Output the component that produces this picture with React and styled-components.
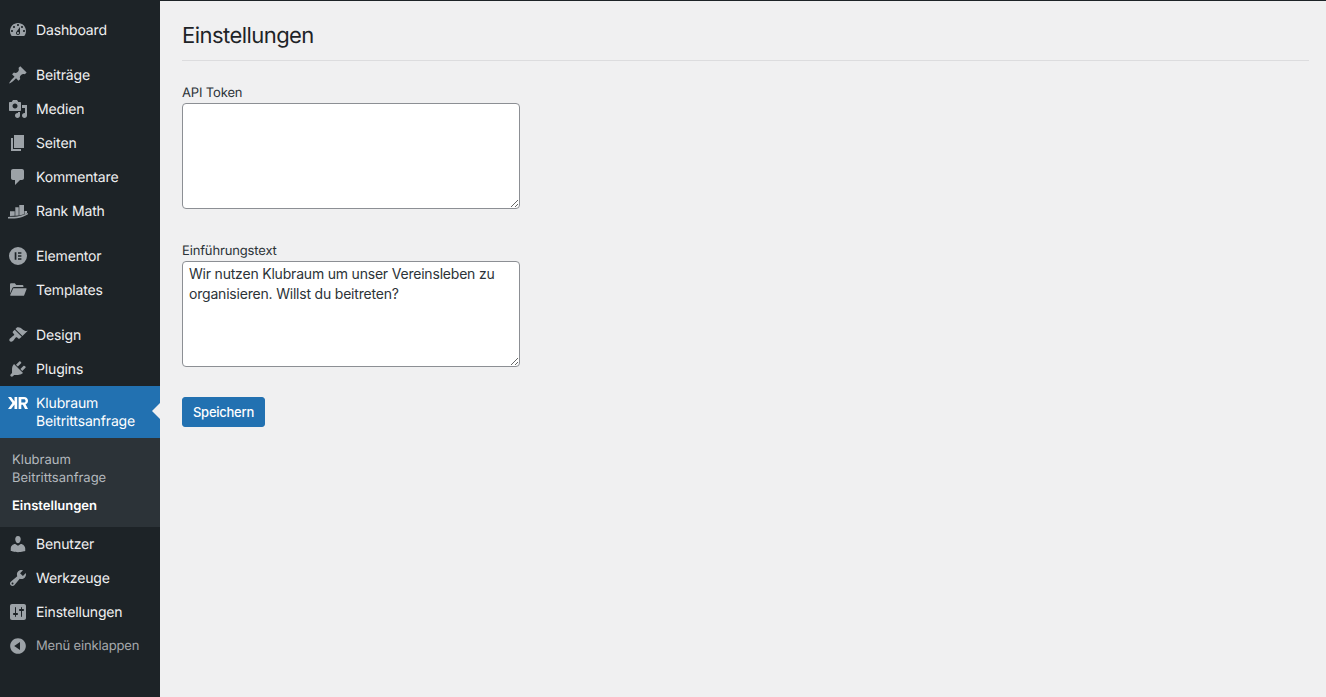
import React from "react";
import styled, { createGlobalStyle } from "styled-components";

const GlobalStyle = createGlobalStyle`
  html, body {
    margin: 0;
    padding: 0;
    height: 100%;
    background: #f0f0f1;
  }
  #root {
    height: 100%;
  }
  * {
    box-sizing: border-box;
  }
`;

const Page = styled.div`
  display: flex;
  height: 697px;
  overflow: hidden;
  font-family: Inter, "Liberation Sans", sans-serif;
  text-rendering: geometricPrecision;
  -webkit-font-smoothing: antialiased;
  border-top: 1px solid #1d2327;
`;

const Sidebar = styled.nav`
  width: 160px;
  flex-shrink: 0;
  background: #1d2327;
  padding-top: 12px;
`;

const Group = styled.div`
  margin-bottom: 11px;
`;

const MenuItem = styled.div`
  position: relative;
  display: flex;
  align-items: ${(p) => (p.$active ? "flex-start" : "center")};
  height: ${(p) => (p.$active ? "52px" : "34px")};
  padding-top: ${(p) => (p.$active ? "7px" : "0")};
  background: ${(p) => (p.$active ? "#2271b1" : "transparent")};
  color: ${(p) => (p.$muted ? "#a7aaad" : p.$active ? "#fff" : "#f0f0f1")};
  font-size: ${(p) => (p.$muted ? "13px" : "14px")};
  line-height: 18px;
  letter-spacing: -0.15px;
  font-weight: 400;
`;

const MenuLabel = styled.span`
  padding-top: ${(p) => (p.$muted ? "0" : "2px")};
`;

const IconSlot = styled.span`
  width: 36px;
  flex-shrink: 0;
  display: flex;
  justify-content: center;
  color: ${(p) => (p.$active ? "#fff" : "#9ca2a7")};
  svg {
    display: block;
    width: 20px;
    height: 20px;
    fill: currentColor;
  }
`;

const Arrow = styled.span`
  position: absolute;
  right: 0;
  top: 17px;
  width: 0;
  height: 0;
  border: 8px solid transparent;
  border-right-color: #f0f0f1;
`;

const Submenu = styled.div`
  height: 89px;
  background: #2c3338;
  padding: 13px 0 0 12px;
`;

const SubLink = styled.div`
  font-size: 13px;
  line-height: 18px;
  margin-bottom: 10px;
  color: ${(p) => (p.$current ? "#fff" : "#b4b9be")};
  font-weight: ${(p) => (p.$current ? 600 : 400)};
`;

const Content = styled.main`
  flex: 1;
  padding: 0 17px 0 22px;
`;

const Title = styled.h1`
  margin: 0;
  height: 60px;
  padding-top: 21px;
  border-bottom: 1px solid #dcdcde;
  font-size: 22px;
  line-height: 29px;
  font-weight: 400;
  letter-spacing: -0.55px;
  color: #1d2327;
`;

const Fields = styled.div`
  padding-top: 22px;
`;

const Field = styled.div`
  margin-bottom: ${(p) => p.$gap};
`;

const FieldLabel = styled.label`
  display: block;
  padding-top: 1px;
  margin-bottom: 1px;
  font-size: 13px;
  line-height: 18px;
  letter-spacing: -0.15px;
  color: #2c3338;
`;

const TextArea = styled.textarea`
  display: block;
  width: 338px;
  height: 106px;
  padding: 2px 6px;
  margin: 0;
  border: 1px solid #8c8f94;
  border-radius: 4px;
  background: #fff;
  color: #2c3338;
  font-family: inherit;
  font-size: 14px;
  line-height: 20px;
  letter-spacing: -0.2px;
  outline: none;
`;

const SaveButton = styled.button`
  display: block;
  width: 83px;
  height: 30px;
  padding: 0;
  border: 1px solid #2271b1;
  border-radius: 3px;
  background: #2271b1;
  color: #fff;
  font-family: inherit;
  font-size: 13px;
  font-weight: 500;
  line-height: 28px;
  letter-spacing: -0.25px;
`;

const icons = {
  dashboard: (
    <svg viewBox="0 0 20 20"><path d="M3.76 16h12.48c1.1-1.37 1.76-3.11 1.76-5 0-4.42-3.58-8-8-8s-8 3.58-8 8c0 1.89.66 3.63 1.76 5zM10 4c.55 0 1 .45 1 1s-.45 1-1 1-1-.45-1-1 .45-1 1-1zM6 6c.55 0 1 .45 1 1s-.45 1-1 1-1-.45-1-1 .45-1 1-1zm8 0c.55 0 1 .45 1 1s-.45 1-1 1-1-.45-1-1 .45-1 1-1zm-5.37 5.55L12 7v6c0 1.1-.9 2-2 2s-2-.9-2-2c0-.57.24-1.08.63-1.45zM4 10c.55 0 1 .45 1 1s-.45 1-1 1-1-.45-1-1 .45-1 1-1zm12 0c.55 0 1 .45 1 1s-.45 1-1 1-1-.45-1-1 .45-1 1-1zm-5 3c0-.55-.45-1-1-1s-1 .45-1 1 .45 1 1 1 1-.45 1-1z" fillRule="evenodd" /></svg>
  ),
  post: (
    <svg viewBox="0 0 20 20"><path d="M10.44 3.02l1.82-1.82 6.36 6.35-1.83 1.82c-1.05-.68-2.48-.57-3.41.36l-.75.75c-.92.93-1.04 2.35-.35 3.41l-1.83 1.82-2.41-2.41-2.8 2.79c-.42.42-3.38 2.71-3.8 2.29s1.86-3.39 2.28-3.81l2.79-2.79L4.1 9.36l1.83-1.82c1.05.69 2.48.57 3.4-.36l.75-.75c.93-.92 1.05-2.35.36-3.41z" /></svg>
  ),
  media: (
    <svg viewBox="0 0 20 20"><path d="M13 11V4c0-.55-.45-1-1-1h-1.67L9 1H5L3.67 3H2c-.55 0-1 .45-1 1v7c0 .55.45 1 1 1h10c.55 0 1-.45 1-1zM7 4.5c1.38 0 2.5 1.12 2.5 2.5S8.38 9.5 7 9.5 4.5 8.38 4.5 7 5.62 4.5 7 4.5zM14 6h5v10.5c0 1.38-1.12 2.5-2.5 2.5S14 17.88 14 16.5s1.12-2.5 2.5-2.5c.17 0 .34.02.5.05V9h-3V6zm-4 8.05V13h2v3.5c0 1.38-1.12 2.5-2.5 2.5S7 17.88 7 16.5 8.12 14 9.5 14c.17 0 .34.02.5.05z" fillRule="evenodd" /></svg>
  ),
  page: (
    <svg viewBox="0 0 20 20"><path d="M6 15V2h10v13H6zm-1 1h8v2H3V5h2v11z" /></svg>
  ),
  comments: (
    <svg viewBox="0 0 20 20"><path d="M5 2h9c1.1 0 2 .9 2 2v7c0 1.1-.9 2-2 2h-2l-5 5v-5H5c-1.1 0-2-.9-2-2V4c0-1.1.9-2 2-2z" /></svg>
  ),
  rankMath: (
    <svg viewBox="0 0 20 20"><path d="M2 10.2h4.700v4.600L2 15.100zM7.300 6.300h3.400v8.300l-3.400.2zM11.300 4H16v9.300l-4.700 1.200zM16.500 10H19v2.400l-2.500.8z" /><path d="M0 15.900c3-.3 6 0 9-.4s7-1.400 11-3.400v1.200c-4 2.300-7.500 3.400-11 3.900-3 .4-6 .4-9 .2z" /></svg>
  ),
  elementor: (
    <svg viewBox="0 0 20 20"><path fillRule="evenodd" d="M10 1a9 9 0 1 0 0 18 9 9 0 0 0 0-18zM6.700 6.200h1.700v7.600H6.700zM10 6.200h3.400v1.500H10zm0 3.050h3.400v1.500H10zm0 3.050h3.400v1.500H10z" /></svg>
  ),
  folder: (
    <svg viewBox="0 0 20 20"><path d="M2 4.200c0-.5.4-.9.9-.9h3.900l1.500 1.700h6.200c.5 0 .9.4.9.9V7H6.100c-.8 0-1.400.4-1.700 1.100L2 13.600zM5.300 8.200h12.600c.5 0 .8.5.6 1l-2.300 6c-.2.4-.5.6-.9.6H2.700c-.4 0-.6-.3-.5-.7z" /></svg>
  ),
  appearance: (
    <svg viewBox="0 0 20 20"><path d="M14.48 11.06L7.41 3.990l1.500-1.500c.5-.56 2.300-.47 3.510.32 1.210.8 1.430 1.280 2.910 2.100 1.180.64 2.450 1.260 4.450.85zm-.71.71L6.700 4.700 4.930 6.470c-.39.39-.39 1.020 0 1.410l1.060 1.060c.39.39.39 1.030 0 1.420-.6.6-1.430 1.110-2.210 1.690-.35.26-.7.53-1.010.84C1.430 13.230.99 14.910 1.600 15.900c.61.99 2.300 1.080 3.630-.25.31-.31.58-.66.84-1.010.58-.78 1.090-1.610 1.690-2.210.39-.39 1.030-.39 1.420 0l1.060 1.060c.39.39 1.020.39 1.410 0z" /></svg>
  ),
  plugins: (
    <svg viewBox="0 0 20 20"><path d="M13.11 4.360L9.870 7.600 8 5.730l3.240-3.240c.35-.34 1.050-.2 1.560.32.52.51.66 1.210.31 1.550zm-8 1.770l.91-1.120 9.010 9.010-1.190.84c-.71.71-2.630 1.160-3.820 1.160H6.140L4.900 17.260c-.59.59-1.540.59-2.120 0-.59-.58-.59-1.530 0-2.120l1.240-1.240v-3.880c0-1.130.4-3.190 1.090-3.890zm7.260 3.970l3.240-3.240c.34-.35 1.040-.21 1.550.31.52.51.66 1.210.31 1.550l-3.240 3.250z" /></svg>
  ),
  klubraum: (
    <svg viewBox="0 0 20 20"><path d="M0 4h3.100l3.400 4.500V4H9.200v12H6.500v-4.500L3.100 16H0l4.400-6z" /><path d="M10.600 4h5.400c2.400 0 4 1.500 4 3.800 0 1.700-.9 3-2.400 3.500L20 16h-3l-2.200-4.200h-1.500V16h-2.700zm2.700 2.300v3.200H16c.9 0 1.500-.6 1.500-1.600s-.6-1.600-1.500-1.600z" fillRule="evenodd" /></svg>
  ),
  users: (
    <svg viewBox="0 0 20 20"><path d="M10 9.250c-2.270 0-2.730-3.440-2.730-3.440C7 4.020 7.820 2 9.970 2c2.160 0 2.980 2.020 2.710 3.810 0 0-.41 3.440-2.680 3.440zm0 2.570L12.720 10c2.390 0 4.520 2.330 4.520 4.530v2.490s-3.650 1.130-7.240 1.130c-3.650 0-7.240-1.130-7.240-1.130v-2.490c0-2.250 1.940-4.480 4.470-4.480z" /></svg>
  ),
  tools: (
    <svg viewBox="0 0 20 20"><path fillRule="evenodd" d="M16.680 9.770c-1.340 1.340-3.300 1.670-4.950.99l-5.410 6.520c-.99.99-2.590.99-3.580 0s-.99-2.590 0-3.570l6.520-5.420c-.68-1.650-.35-3.610.99-4.950 1.280-1.280 3.120-1.620 4.720-1.060l-2.890 2.890 2.820 2.820 2.860-2.870c.53 1.580.18 3.390-1.080 4.650zM3.810 16.210c.4.39 1.040.39 1.430 0 .4-.4.4-1.040 0-1.430-.39-.4-1.030-.4-1.430 0-.39.39-.39 1.030 0 1.430z" /></svg>
  ),
  settings: (
    <svg viewBox="0 0 20 20"><path fillRule="evenodd" d="M18 16V4c0-1.100-.9-2-2-2H4c-1.100 0-2 .9-2 2v12c0 1.100.9 2 2 2h12c1.100 0 2-.9 2-2zM8 11h1c.55 0 1 .45 1 1s-.45 1-1 1H8v1.500c0 .28-.22.5-.5.5s-.5-.22-.5-.5V13H6c-.55 0-1-.45-1-1s.45-1 1-1h1V5.500c0-.28.22-.5.5-.5s.5.22.5.5V11zm5-2h-1c-.55 0-1-.45-1-1s.45-1 1-1h1V5.500c0-.28.22-.5.5-.5s.5.22.5.5V7h1c.55 0 1 .45 1 1s-.45 1-1 1h-1v5.500c0 .28-.22.5-.5.5s-.5-.22-.5-.5V9z" /></svg>
  ),
  collapse: (
    <svg viewBox="0 0 20 20"><path fillRule="evenodd" d="M10 2.160c4.330 0 7.840 3.510 7.840 7.840s-3.510 7.840-7.840 7.840S2.160 14.330 2.160 10 5.710 2.160 10 2.160zm2 11.720V6.120L6.180 9.970z" /></svg>
  ),
};

const Item = ({ icon, label, muted }) => (
  <MenuItem $muted={muted}>
    <IconSlot>{icons[icon]}</IconSlot>
    <MenuLabel $muted={muted}>{label}</MenuLabel>
  </MenuItem>
);

export default function App() {
  return (
    <>
      <GlobalStyle />
      <Page>
        <Sidebar>
          <Group>
            <Item icon="dashboard" label="Dashboard" />
          </Group>
          <Group>
            <Item icon="post" label="Beiträge" />
            <Item icon="media" label="Medien" />
            <Item icon="page" label="Seiten" />
            <Item icon="comments" label="Kommentare" />
            <Item icon="rankMath" label="Rank Math" />
          </Group>
          <Group>
            <Item icon="elementor" label="Elementor" />
            <Item icon="folder" label="Templates" />
          </Group>
          <Item icon="appearance" label="Design" />
          <Item icon="plugins" label="Plugins" />
          <MenuItem $active>
            <IconSlot $active>{icons.klubraum}</IconSlot>
            <MenuLabel>
              Klubraum
              <br />
              Beitrittsanfrage
            </MenuLabel>
            <Arrow />
          </MenuItem>
          <Submenu>
            <SubLink>
              Klubraum
              <br />
              Beitrittsanfrage
            </SubLink>
            <SubLink $current>Einstellungen</SubLink>
          </Submenu>
          <Item icon="users" label="Benutzer" />
          <Item icon="tools" label="Werkzeuge" />
          <Item icon="settings" label="Einstellungen" />
          <Item icon="collapse" label="Menü einklappen" muted />
        </Sidebar>
        <Content>
          <Title>Einstellungen</Title>
          <Fields>
            <Field $gap="32px">
              <FieldLabel>API Token</FieldLabel>
              <TextArea defaultValue="" />
            </Field>
            <Field $gap="30px">
              <FieldLabel>Einführungstext</FieldLabel>
              <TextArea defaultValue="Wir nutzen Klubraum um unser Vereinsleben zu organisieren. Willst du beitreten?" />
            </Field>
          </Fields>
          <SaveButton>Speichern</SaveButton>
        </Content>
      </Page>
    </>
  );
}
